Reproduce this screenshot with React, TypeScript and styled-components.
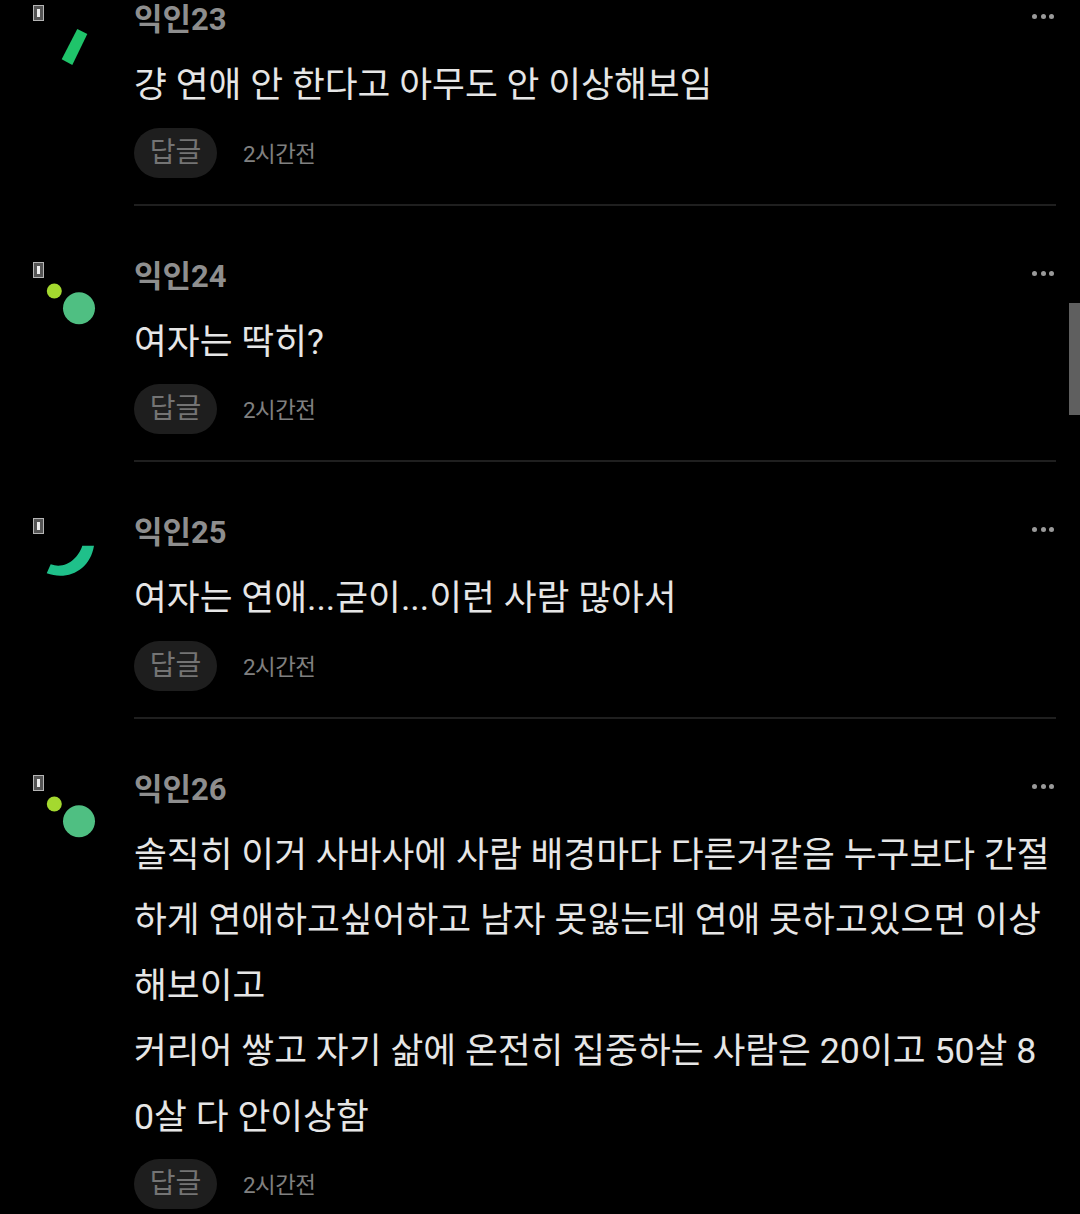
import { createGlobalStyle } from "styled-components";
import styled from "styled-components";

const GlobalStyle = createGlobalStyle`
    html, body {
        margin: 0;
        padding: 0;
        background-color: #000;
        font-family: "Roboto", "Noto Sans CJK KR", sans-serif;
    }
`

const Page = styled.div`
    position: relative;
    height: 1214px;
    overflow: hidden;
    background-color: #000;
`

const List = styled.div`
    margin-top: -51px;
`

const Row = styled.div`
    display: grid;
    grid-template-columns: 134px 1fr;
    padding-right: 24px;
`

const Avatar = styled.div`
    padding: 51px 0 0 30px;

    svg {
        display: block;
    }
`

const Main = styled.div<{ $last?: boolean }>`
    padding: 51px 0 25.75px;
    border-bottom: 2px solid ${(p) => (p.$last ? "transparent" : "#1f1f1f")};
`

const Head = styled.div`
    display: flex;
    justify-content: space-between;
    height: 38px;
`

const Name = styled.span`
    font-size: 31px;
    font-weight: 700;
    line-height: 40px;
    color: #8e8e8e;
`

const Dots = styled.div`
    display: flex;
    gap: 3.5px;
    margin: 14px 0 0;
    padding-right: 2px;

    i {
        display: block;
        width: 5px;
        height: 5px;
        border-radius: 50%;
        background-color: #9a9a9a;
    }
`

const Body = styled.div`
    margin-top: 15.25px;
    padding-right: 4px;
    font-size: 35.7px;
    font-weight: 400;
    line-height: 65.5px;
    color: #e6e6e6;
    white-space: pre-wrap;
    word-break: break-all;
`

const Foot = styled.div`
    display: flex;
    align-items: center;
    gap: 26px;
    margin-top: 9px;
`

const ReplyButton = styled.button`
    width: 83px;
    height: 50px;
    padding: 0;
    border: 0;
    border-radius: 25px;
    background-color: #1e1e1e;
    color: #747474;
    font-family: inherit;
    font-size: 28px;
    line-height: 1;
`

const Time = styled.span`
    margin-top: -2px;
    font-size: 22.4px;
    letter-spacing: -0.5px;
    color: #808080;
`

const Scrollbar = styled.div`
    position: absolute;
    top: 303px;
    right: 0;
    width: 11px;
    height: 112px;
    background-color: #5f5f5f;
`

function Tofu() {
    return (
        <g>
            <rect x="3.5" y="5.5" width="10" height="15" fill="#555" stroke="#b5b5b5" />
            <rect x="7" y="9" width="3" height="8" fill="#eee" />
        </g>
    );
}

const shapes = {
    bar: <polygon points="47.3,29 57.3,34 42.3,65 31.7,59.3" fill="#1fc46a" />,
    dots: (
        <>
            <circle cx="24.3" cy="34" r="7.5" fill="#a4d92f" />
            <circle cx="49" cy="51.3" r="16" fill="#4fbf82" />
        </>
    ),
    arc: (
        <path
            d="M64 32.7 L52.3 32.7 C49 44 36 57 20.7 51.3 L16.7 60.3 C38 68 60 57 64 32.7 Z"
            fill="#1fc08a"
        />
    ),
};

interface IComment {
    name: string;
    shape: keyof typeof shapes;
    text: string;
}

const comments: IComment[] = [
    { name: "익인23", shape: "bar", text: "걍 연애 안 한다고 아무도 안 이상해보임" },
    { name: "익인24", shape: "dots", text: "여자는 딱히?" },
    { name: "익인25", shape: "arc", text: "여자는 연애...굳이...이런 사람 많아서" },
    {
        name: "익인26",
        shape: "dots",
        text: "솔직히 이거 사바사에 사람 배경마다 다른거같음 누구보다 간절하게 연애하고싶어하고 남자 못잃는데 연애 못하고있으면 이상해보이고\n커리어 쌓고 자기 삶에 온전히 집중하는 사람은 20이고 50살 80살 다 안이상함",
    },
];

export default function App() {
    return (
        <Page>
            <GlobalStyle />
            <List>
                {comments.map((c, i) => (
                    <Row key={c.name}>
                        <Avatar>
                            <svg width="70" height="70" viewBox="0 0 70 70">
                                <Tofu />
                                {shapes[c.shape]}
                            </svg>
                        </Avatar>
                        <Main $last={i === comments.length - 1}>
                            <Head>
                                <Name>{c.name}</Name>
                                <Dots><i /><i /><i /></Dots>
                            </Head>
                            <Body>{c.text}</Body>
                            <Foot>
                                <ReplyButton>답글</ReplyButton>
                                <Time>2시간전</Time>
                            </Foot>
                        </Main>
                    </Row>
                ))}
            </List>
            <Scrollbar />
        </Page>
    );
}
